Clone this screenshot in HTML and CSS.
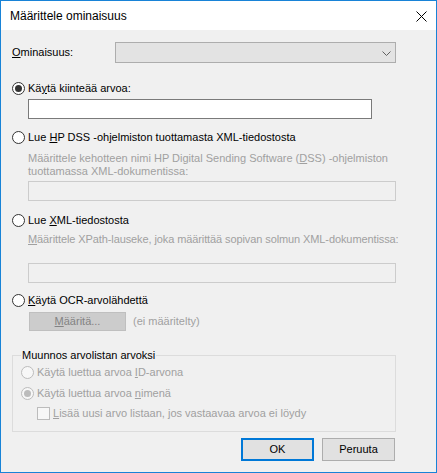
FILE: index.html
```html
<!DOCTYPE html>
<html lang="fi">
<head>
<meta charset="utf-8">
<title>Määrittele ominaisuus</title>
<link rel="stylesheet" href="styles.css">
</head>
<body>
<div class="window">
  <div class="titlebar">
    <span class="title">Määrittele ominaisuus</span>
    <svg class="close" width="11" height="11" viewBox="0 0 11 11"><path d="M0.5 0.5 L10.5 10.5 M10.5 0.5 L0.5 10.5" stroke="#000" stroke-width="1" fill="none"/></svg>
  </div>
  <div class="client">
    <div class="row prop-row">
      <span class="label"><u>O</u>minaisuus:</span>
      <div class="combo">
        <svg class="chev" width="9" height="5" viewBox="0 0 9 5"><path d="M0.5 0.5 L4.5 4.5 L8.5 0.5" stroke="#606060" stroke-width="1" fill="none"/></svg>
      </div>
    </div>

    <div class="opt opt1"><span class="radio checked"></span><span>Kä<u>y</u>tä kiinteää arvoa:</span></div>
    <div class="textbox tb1"></div>

    <div class="opt opt2"><span class="radio"></span><span>Lue <u>H</u>P DSS -ohjelmiston tuottamasta XML-tiedostosta</span></div>
    <p class="desc desc2">Määrittele kehotteen nimi HP Digital Sending Software (<u>D</u>SS) -ohjelmiston tuottamassa XML-dokumentissa:</p>
    <div class="textbox disabled tb2"></div>

    <div class="opt opt3"><span class="radio"></span><span>Lue <u>X</u>ML-tiedostosta</span></div>
    <p class="desc desc3"><u>M</u>äärittele XPath-lauseke, joka määrittää sopivan solmun XML-dokumentissa:</p>
    <div class="textbox disabled tb3"></div>

    <div class="opt opt4"><span class="radio"></span><span><u>K</u>äytä OCR-arvolähdettä</span></div>
    <div class="ocr-row">
      <span class="btn-disabled"><u>M</u>ääritä...</span>
      <span class="gray">(ei määritelty)</span>
    </div>

    <fieldset class="group">
      <legend>Muunnos arvolistan arvoksi</legend>
      <div class="opt gopt1"><span class="radio dis"></span><span class="gray">Käytä luettua arvoa <u>I</u>D-arvona</span></div>
      <div class="opt gopt2"><span class="radio dis checked"></span><span class="gray">Käytä luettua arvoa <u>n</u>imenä</span></div>
      <div class="opt gchk"><span class="check"></span><span class="gray"><u>L</u>isää uusi arvo listaan, jos vastaavaa arvoa ei löydy</span></div>
    </fieldset>

    <div class="buttons">
      <span class="btn default">OK</span>
      <span class="btn">Peruuta</span>
    </div>
  </div>
</div>
</body>
</html>
```

FILE: styles.css
```css
html, body {
  margin: 0;
  padding: 0;
  background: #f0f0f0;
}

.window {
  width: 437px;
  height: 473px;
  box-sizing: border-box;
  border: 1px solid #1883d7;
  background: #f0f0f0;
  display: flex;
  flex-direction: column;
  font-family: "Liberation Sans", Arial, sans-serif;
  font-size: 11px;
  line-height: 13px;
  color: #000;
  overflow: hidden;
}

.titlebar {
  height: 29px;
  flex: none;
  background: #fff;
  display: flex;
  align-items: center;
  justify-content: space-between;
  padding: 0 9px 0 9px;
}

.title {
  font-size: 12px;
  line-height: 14px;
  color: #000;
  margin-top: 1px;
}

.close {
  display: block;
  margin-top: 1px;
}

.client {
  flex: 1;
  padding: 0 0 0 11px;
  display: flex;
  flex-direction: column;
  align-items: flex-start;
}

u {
  text-decoration: underline;
  text-underline-offset: 1px;
}

.row {
  display: flex;
  align-items: center;
}

.prop-row {
  margin-top: 12px;
  height: 21px;
  flex: none;
}

.prop-row .label {
  width: 103px;
}

.combo {
  width: 281px;
  height: 21px;
  box-sizing: border-box;
  border: 1px solid #adadad;
  background: #e3e3e3;
  display: flex;
  align-items: center;
  justify-content: flex-end;
  padding-right: 4px;
}

.chev {
  display: block;
  margin-top: 1px;
}

.opt {
  display: flex;
  align-items: center;
  height: 13px;
  flex: none;
  gap: 3px;
  white-space: nowrap;
}

.radio {
  width: 13px;
  height: 13px;
  box-sizing: border-box;
  border: 1px solid #333;
  border-radius: 50%;
  background: #fff;
  position: relative;
  flex: none;
}

.radio.checked::after {
  content: "";
  position: absolute;
  left: 2px;
  top: 2px;
  width: 7px;
  height: 7px;
  border-radius: 50%;
  background: #333;
}

.radio.dis {
  border-color: #bcbcbc;
  background: #f7f7f7;
}

.radio.dis.checked::after {
  background: #bcbcbc;
}

.check {
  width: 13px;
  height: 13px;
  box-sizing: border-box;
  border: 1px solid #bcbcbc;
  background: #f7f7f7;
  flex: none;
}

.opt1 { margin-top: 19px; }
.opt2 { margin-top: 12px; }
.opt3 { margin-top: 13px; }
.opt4 { margin-top: 11px; }

.textbox {
  height: 20px;
  flex: none;
  box-sizing: border-box;
  margin-left: 16px;
  border: 1px solid #7a7a7a;
  background: #fff;
}

.textbox.disabled {
  border-color: #cccccc;
  background: #f0f0f0;
  width: 368px;
}

.tb1 { width: 344px; margin-top: 4px; }
.tb2 { margin-top: 3px; }
.tb3 { margin-top: 17px; }

.desc {
  margin: 0 0 0 16px;
  width: 368px;
  color: #a0a0a0;
  flex: none;
}

.desc2 { margin-top: 8px; }
.desc3 { margin-top: 6px; white-space: nowrap; letter-spacing: -0.1px; }

.gray {
  color: #a0a0a0;
}

.ocr-row {
  margin-top: 5px;
  margin-left: 17px;
  display: flex;
  align-items: center;
  gap: 7px;
  flex: none;
}

.btn-disabled {
  width: 97px;
  height: 19px;
  box-sizing: border-box;
  background: #cccccc;
  border: 1px solid #bfbfbf;
  color: #838383;
  display: flex;
  align-items: center;
  justify-content: center;
}

.group {
  margin: 18px 0 0 0;
  width: 384px;
  height: 83px;
  flex: none;
  box-sizing: border-box;
  border: 1px solid #dcdcdc;
  padding: 0 0 0 8px;
  min-width: 0;
}

.group legend {
  padding: 0 1px;
  margin-left: 0;
  line-height: 12px;
  color: #000;
}

.gopt1 { margin-top: 5px; }
.gopt2 { margin-top: 8px; }
.gchk { margin-top: 7px; margin-left: 16px; }

.buttons {
  margin-top: 6px;
  width: 383px;
  display: flex;
  justify-content: flex-end;
  gap: 8px;
  flex: none;
}

.btn {
  width: 73px;
  height: 23px;
  box-sizing: border-box;
  border: 1px solid #adadad;
  background: #e1e1e1;
  display: flex;
  align-items: center;
  justify-content: center;
}

.btn.default {
  border: 2px solid #0078d7;
}
```
